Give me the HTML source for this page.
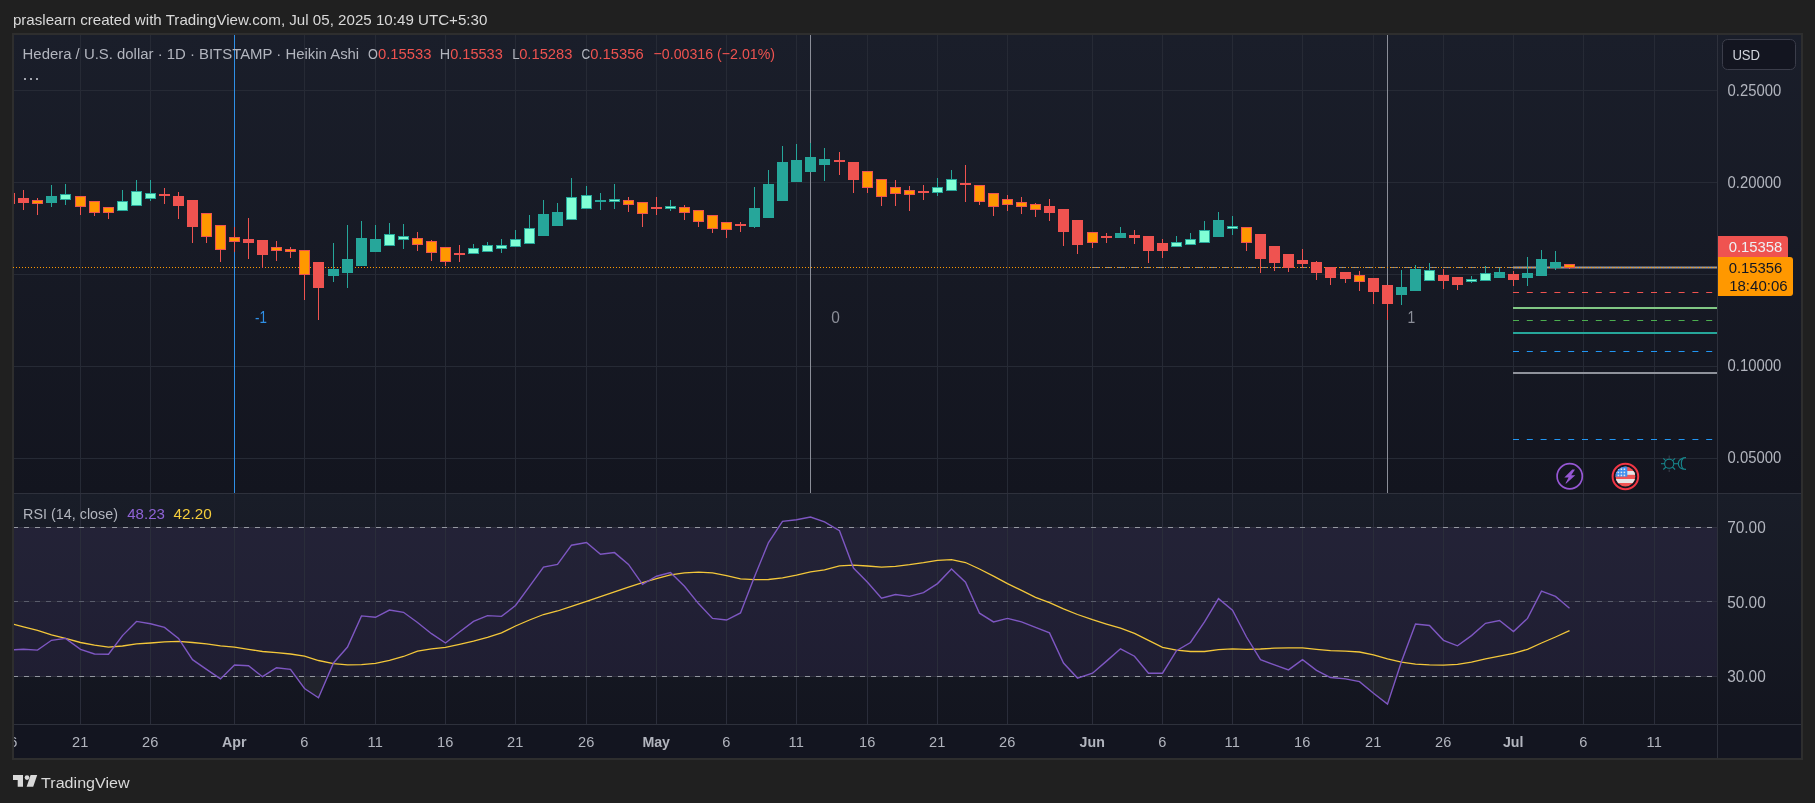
<!DOCTYPE html>
<html><head><meta charset="utf-8">
<style>
html,body{margin:0;padding:0;}
body{width:1815px;height:803px;background:#202020;overflow:hidden;position:relative;font-family:"Liberation Sans",sans-serif;}
.abs{position:absolute;}
.hdr{position:absolute;left:13px;top:10px;font-size:15px;color:#d6d6d6;white-space:nowrap;line-height:18px;}
svg{position:absolute;left:0;top:0;will-change:transform;}
.lg{position:absolute;left:23px;top:45px;font-size:15px;color:#b2b5be;white-space:nowrap;line-height:18px;}
.lg .v{color:#ef5350;}
.dots{position:absolute;left:23px;top:64px;font-size:15px;color:#b2b5be;line-height:18px;letter-spacing:1px;}
.rl{position:absolute;left:23px;top:505px;font-size:15px;color:#b2b5be;white-space:nowrap;line-height:18px;}
.pl{position:absolute;left:1728px;font-size:14px;color:#b2b5be;line-height:16px;}
.tl{position:absolute;top:734px;width:80px;text-align:center;font-size:14px;color:#b2b5be;line-height:16px;}
.tl.b{font-weight:bold;}
.usd{position:absolute;left:1722px;top:39px;width:72px;height:30px;border:1px solid #3b3d4a;border-radius:5px;background:#131520;box-sizing:border-box;}
.usd span{position:absolute;left:10px;top:6px;font-size:14px;color:#d1d4dc;}
.foot{position:absolute;left:42px;top:773px;font-size:15px;line-height:18px;color:#d9d9d9;}
</style></head><body>
<svg width="1815" height="803" viewBox="0 0 1815 803">
<defs>
<linearGradient id="gm" x1="0" y1="0" x2="0" y2="1"><stop offset="0" stop-color="#1a1e2a"/><stop offset="1" stop-color="#13151f"/></linearGradient>
<linearGradient id="gr" x1="0" y1="0" x2="0" y2="1"><stop offset="0" stop-color="#191d28"/><stop offset="1" stop-color="#13151f"/></linearGradient>
<clipPath id="cm"><rect x="14" y="35" width="1703" height="458"/></clipPath>
<clipPath id="cr"><rect x="14" y="494" width="1703" height="230"/></clipPath>
</defs>
<rect x="12" y="33" width="1791" height="727" fill="#2e2e2e"/>
<rect x="14" y="35" width="1787" height="458" fill="url(#gm)"/>
<rect x="14" y="494" width="1787" height="230" fill="url(#gr)"/>
<rect x="14" y="725" width="1787" height="33" fill="#131520"/>
<g stroke="#262a35" stroke-width="1" clip-path="url(#cm)">
<line x1="80.5" y1="34" x2="80.5" y2="493"/>
<line x1="150.5" y1="34" x2="150.5" y2="493"/>
<line x1="234.5" y1="34" x2="234.5" y2="493"/>
<line x1="304.5" y1="34" x2="304.5" y2="493"/>
<line x1="375.5" y1="34" x2="375.5" y2="493"/>
<line x1="445.5" y1="34" x2="445.5" y2="493"/>
<line x1="515.5" y1="34" x2="515.5" y2="493"/>
<line x1="586.5" y1="34" x2="586.5" y2="493"/>
<line x1="656.5" y1="34" x2="656.5" y2="493"/>
<line x1="726.5" y1="34" x2="726.5" y2="493"/>
<line x1="796.5" y1="34" x2="796.5" y2="493"/>
<line x1="867.5" y1="34" x2="867.5" y2="493"/>
<line x1="937.5" y1="34" x2="937.5" y2="493"/>
<line x1="1007.5" y1="34" x2="1007.5" y2="493"/>
<line x1="1092.5" y1="34" x2="1092.5" y2="493"/>
<line x1="1162.5" y1="34" x2="1162.5" y2="493"/>
<line x1="1232.5" y1="34" x2="1232.5" y2="493"/>
<line x1="1302.5" y1="34" x2="1302.5" y2="493"/>
<line x1="1373.5" y1="34" x2="1373.5" y2="493"/>
<line x1="1443.5" y1="34" x2="1443.5" y2="493"/>
<line x1="1513.5" y1="34" x2="1513.5" y2="493"/>
<line x1="1583.5" y1="34" x2="1583.5" y2="493"/>
<line x1="1654.5" y1="34" x2="1654.5" y2="493"/>
<line x1="13" y1="90.5" x2="1717" y2="90.5"/>
<line x1="13" y1="182.5" x2="1717" y2="182.5"/>
<line x1="13" y1="274.5" x2="1717" y2="274.5"/>
<line x1="13" y1="366.5" x2="1717" y2="366.5"/>
<line x1="13" y1="458.5" x2="1717" y2="458.5"/>
</g>
<line x1="14" y1="493.5" x2="1801" y2="493.5" stroke="#2e313c"/>
<line x1="14" y1="724.5" x2="1801" y2="724.5" stroke="#2e313c"/>
<line x1="1717.5" y1="35" x2="1717.5" y2="758" stroke="#2e313c"/>
<!-- vertical markers -->
<rect x="234" y="35" width="1" height="458" fill="#2f8fe6"/>
<rect x="810" y="35" width="1" height="458" fill="#8b8e98"/>
<rect x="1387" y="35" width="1" height="458" fill="#8b8e98"/>
<!-- current price dotted line -->
<line x1="1092" y1="267.5" x2="1513" y2="267.5" stroke="#7a8699" stroke-width="1" stroke-dasharray="7 6"/>
<rect x="1513" y="266.5" width="204" height="2" fill="#9598a1"/>
<line x1="13" y1="267.5" x2="1717" y2="267.5" stroke="#ff9800" stroke-width="1" stroke-dasharray="1 2"/>
<!-- level lines -->
<line x1="1513" y1="292.5" x2="1717" y2="292.5" stroke="#ef5350" stroke-width="1" stroke-dasharray="6 7.8"/>
<rect x="1513" y="307" width="204" height="2" fill="#81c784"/>
<line x1="1513" y1="320.5" x2="1717" y2="320.5" stroke="#4caf50" stroke-width="1" stroke-dasharray="6 7.8"/>
<rect x="1513" y="332" width="204" height="2" fill="#26a69a"/>
<line x1="1513" y1="351.5" x2="1717" y2="351.5" stroke="#2196f3" stroke-width="1" stroke-dasharray="6 7.8"/>
<rect x="1513" y="372" width="204" height="2" fill="#8f929b"/>
<line x1="1513" y1="439.5" x2="1717" y2="439.5" stroke="#2196f3" stroke-width="1" stroke-dasharray="6 7.8"/>
<g clip-path="url(#cm)">
<rect x="9" y="193" width="1" height="11" fill="#ef5350"/>
<rect x="4" y="193" width="11" height="11" fill="#ef5350"/>
<rect x="5" y="194" width="9" height="9" fill="#ff9800"/>
<rect x="23" y="190" width="1" height="20" fill="#ef5350"/>
<rect x="18" y="198" width="11" height="5" fill="#ef5350"/>
<rect x="37" y="198" width="1" height="17" fill="#ef5350"/>
<rect x="32" y="200" width="11" height="4" fill="#ef5350"/>
<rect x="33" y="201" width="9" height="2" fill="#ff9800"/>
<rect x="51" y="185" width="1" height="22" fill="#26a69a"/>
<rect x="46" y="196" width="11" height="7" fill="#26a69a"/>
<rect x="65" y="184" width="1" height="21" fill="#26a69a"/>
<rect x="60" y="194" width="11" height="6" fill="#26a69a"/>
<rect x="61" y="195" width="9" height="4" fill="#80ffd5"/>
<rect x="80" y="196" width="1" height="19" fill="#ef5350"/>
<rect x="75" y="196" width="11" height="11" fill="#ef5350"/>
<rect x="76" y="197" width="9" height="9" fill="#ff9800"/>
<rect x="94" y="201" width="1" height="15" fill="#ef5350"/>
<rect x="89" y="201" width="11" height="12" fill="#ef5350"/>
<rect x="90" y="202" width="9" height="10" fill="#ff9800"/>
<rect x="108" y="207" width="1" height="12" fill="#ef5350"/>
<rect x="103" y="207" width="11" height="6" fill="#ef5350"/>
<rect x="104" y="208" width="9" height="4" fill="#ff9800"/>
<rect x="122" y="190" width="1" height="21" fill="#26a69a"/>
<rect x="117" y="201" width="11" height="10" fill="#26a69a"/>
<rect x="118" y="202" width="9" height="8" fill="#80ffd5"/>
<rect x="136" y="180" width="1" height="26" fill="#26a69a"/>
<rect x="131" y="191" width="11" height="15" fill="#26a69a"/>
<rect x="132" y="192" width="9" height="13" fill="#80ffd5"/>
<rect x="150" y="180" width="1" height="21" fill="#26a69a"/>
<rect x="145" y="193" width="11" height="6" fill="#26a69a"/>
<rect x="146" y="194" width="9" height="4" fill="#80ffd5"/>
<rect x="164" y="188" width="1" height="16" fill="#ef5350"/>
<rect x="159" y="194" width="11" height="2" fill="#ef5350"/>
<rect x="178" y="192" width="1" height="27" fill="#ef5350"/>
<rect x="173" y="196" width="11" height="10" fill="#ef5350"/>
<rect x="192" y="200" width="1" height="43" fill="#ef5350"/>
<rect x="187" y="200" width="11" height="27" fill="#ef5350"/>
<rect x="206" y="213" width="1" height="30" fill="#ef5350"/>
<rect x="201" y="213" width="11" height="24" fill="#ef5350"/>
<rect x="202" y="214" width="9" height="22" fill="#ff9800"/>
<rect x="220" y="225" width="1" height="37" fill="#ef5350"/>
<rect x="215" y="225" width="11" height="25" fill="#ef5350"/>
<rect x="216" y="226" width="9" height="23" fill="#ff9800"/>
<rect x="234" y="227" width="1" height="25" fill="#ef5350"/>
<rect x="229" y="237" width="11" height="5" fill="#ef5350"/>
<rect x="230" y="238" width="9" height="3" fill="#ff9800"/>
<rect x="248" y="218" width="1" height="41" fill="#ef5350"/>
<rect x="243" y="239" width="11" height="4" fill="#ef5350"/>
<rect x="262" y="240" width="1" height="28" fill="#ef5350"/>
<rect x="257" y="240" width="11" height="15" fill="#ef5350"/>
<rect x="276" y="241" width="1" height="20" fill="#ef5350"/>
<rect x="271" y="247" width="11" height="4" fill="#ef5350"/>
<rect x="272" y="248" width="9" height="2" fill="#ff9800"/>
<rect x="290" y="247" width="1" height="11" fill="#ef5350"/>
<rect x="285" y="249" width="11" height="3" fill="#ef5350"/>
<rect x="286" y="250" width="9" height="1" fill="#ff9800"/>
<rect x="304" y="250" width="1" height="50" fill="#ef5350"/>
<rect x="299" y="250" width="11" height="25" fill="#ef5350"/>
<rect x="300" y="251" width="9" height="23" fill="#ff9800"/>
<rect x="318" y="262" width="1" height="58" fill="#ef5350"/>
<rect x="313" y="262" width="11" height="26" fill="#ef5350"/>
<rect x="333" y="243" width="1" height="39" fill="#26a69a"/>
<rect x="328" y="269" width="11" height="7" fill="#26a69a"/>
<rect x="347" y="225" width="1" height="63" fill="#26a69a"/>
<rect x="342" y="259" width="11" height="14" fill="#26a69a"/>
<rect x="361" y="221" width="1" height="45" fill="#26a69a"/>
<rect x="356" y="238" width="11" height="28" fill="#26a69a"/>
<rect x="375" y="225" width="1" height="27" fill="#26a69a"/>
<rect x="370" y="239" width="11" height="13" fill="#26a69a"/>
<rect x="389" y="223" width="1" height="23" fill="#26a69a"/>
<rect x="384" y="234" width="11" height="12" fill="#26a69a"/>
<rect x="385" y="235" width="9" height="10" fill="#80ffd5"/>
<rect x="403" y="224" width="1" height="25" fill="#26a69a"/>
<rect x="398" y="236" width="11" height="4" fill="#26a69a"/>
<rect x="399" y="237" width="9" height="2" fill="#80ffd5"/>
<rect x="417" y="232" width="1" height="19" fill="#ef5350"/>
<rect x="412" y="238" width="11" height="7" fill="#ef5350"/>
<rect x="413" y="239" width="9" height="5" fill="#ff9800"/>
<rect x="431" y="240" width="1" height="21" fill="#ef5350"/>
<rect x="426" y="241" width="11" height="12" fill="#ef5350"/>
<rect x="427" y="242" width="9" height="10" fill="#ff9800"/>
<rect x="445" y="247" width="1" height="19" fill="#ef5350"/>
<rect x="440" y="247" width="11" height="15" fill="#ef5350"/>
<rect x="441" y="248" width="9" height="13" fill="#ff9800"/>
<rect x="459" y="245" width="1" height="17" fill="#ef5350"/>
<rect x="454" y="253" width="11" height="2" fill="#ef5350"/>
<rect x="473" y="244" width="1" height="10" fill="#26a69a"/>
<rect x="468" y="248" width="11" height="6" fill="#26a69a"/>
<rect x="469" y="249" width="9" height="4" fill="#80ffd5"/>
<rect x="487" y="242" width="1" height="10" fill="#26a69a"/>
<rect x="482" y="245" width="11" height="7" fill="#26a69a"/>
<rect x="483" y="246" width="9" height="5" fill="#80ffd5"/>
<rect x="501" y="239" width="1" height="14" fill="#26a69a"/>
<rect x="496" y="245" width="11" height="4" fill="#26a69a"/>
<rect x="497" y="246" width="9" height="2" fill="#80ffd5"/>
<rect x="515" y="230" width="1" height="17" fill="#26a69a"/>
<rect x="510" y="239" width="11" height="8" fill="#26a69a"/>
<rect x="511" y="240" width="9" height="6" fill="#80ffd5"/>
<rect x="529" y="215" width="1" height="29" fill="#26a69a"/>
<rect x="524" y="228" width="11" height="16" fill="#26a69a"/>
<rect x="525" y="229" width="9" height="14" fill="#80ffd5"/>
<rect x="543" y="200" width="1" height="36" fill="#26a69a"/>
<rect x="538" y="214" width="11" height="22" fill="#26a69a"/>
<rect x="557" y="203" width="1" height="23" fill="#26a69a"/>
<rect x="552" y="212" width="11" height="14" fill="#26a69a"/>
<rect x="571" y="178" width="1" height="42" fill="#26a69a"/>
<rect x="566" y="197" width="11" height="23" fill="#26a69a"/>
<rect x="567" y="198" width="9" height="21" fill="#80ffd5"/>
<rect x="586" y="186" width="1" height="23" fill="#26a69a"/>
<rect x="581" y="195" width="11" height="14" fill="#26a69a"/>
<rect x="582" y="196" width="9" height="12" fill="#80ffd5"/>
<rect x="600" y="193" width="1" height="17" fill="#26a69a"/>
<rect x="595" y="200" width="11" height="2" fill="#26a69a"/>
<rect x="614" y="184" width="1" height="25" fill="#26a69a"/>
<rect x="609" y="199" width="11" height="3" fill="#26a69a"/>
<rect x="610" y="200" width="9" height="1" fill="#80ffd5"/>
<rect x="628" y="197" width="1" height="15" fill="#ef5350"/>
<rect x="623" y="200" width="11" height="5" fill="#ef5350"/>
<rect x="624" y="201" width="9" height="3" fill="#ff9800"/>
<rect x="642" y="202" width="1" height="25" fill="#ef5350"/>
<rect x="637" y="202" width="11" height="12" fill="#ef5350"/>
<rect x="638" y="203" width="9" height="10" fill="#ff9800"/>
<rect x="656" y="197" width="1" height="18" fill="#ef5350"/>
<rect x="651" y="207" width="11" height="2" fill="#ef5350"/>
<rect x="670" y="200" width="1" height="11" fill="#26a69a"/>
<rect x="665" y="206" width="11" height="3" fill="#26a69a"/>
<rect x="666" y="207" width="9" height="1" fill="#80ffd5"/>
<rect x="684" y="205" width="1" height="15" fill="#ef5350"/>
<rect x="679" y="207" width="11" height="6" fill="#ef5350"/>
<rect x="680" y="208" width="9" height="4" fill="#ff9800"/>
<rect x="698" y="210" width="1" height="17" fill="#ef5350"/>
<rect x="693" y="210" width="11" height="12" fill="#ef5350"/>
<rect x="694" y="211" width="9" height="10" fill="#ff9800"/>
<rect x="712" y="215" width="1" height="18" fill="#ef5350"/>
<rect x="707" y="215" width="11" height="14" fill="#ef5350"/>
<rect x="708" y="216" width="9" height="12" fill="#ff9800"/>
<rect x="726" y="222" width="1" height="16" fill="#ef5350"/>
<rect x="721" y="222" width="11" height="8" fill="#ef5350"/>
<rect x="722" y="223" width="9" height="6" fill="#ff9800"/>
<rect x="740" y="222" width="1" height="10" fill="#ef5350"/>
<rect x="735" y="224" width="11" height="2" fill="#ef5350"/>
<rect x="754" y="187" width="1" height="41" fill="#26a69a"/>
<rect x="749" y="208" width="11" height="19" fill="#26a69a"/>
<rect x="768" y="170" width="1" height="48" fill="#26a69a"/>
<rect x="763" y="184" width="11" height="34" fill="#26a69a"/>
<rect x="782" y="146" width="1" height="55" fill="#26a69a"/>
<rect x="777" y="162" width="11" height="39" fill="#26a69a"/>
<rect x="796" y="144" width="1" height="38" fill="#26a69a"/>
<rect x="791" y="160" width="11" height="22" fill="#26a69a"/>
<rect x="810" y="143" width="1" height="29" fill="#26a69a"/>
<rect x="805" y="157" width="11" height="15" fill="#26a69a"/>
<rect x="824" y="148" width="1" height="33" fill="#26a69a"/>
<rect x="819" y="159" width="11" height="6" fill="#26a69a"/>
<rect x="839" y="152" width="1" height="23" fill="#ef5350"/>
<rect x="834" y="160" width="11" height="2" fill="#ef5350"/>
<rect x="853" y="162" width="1" height="31" fill="#ef5350"/>
<rect x="848" y="162" width="11" height="18" fill="#ef5350"/>
<rect x="867" y="171" width="1" height="22" fill="#ef5350"/>
<rect x="862" y="171" width="11" height="17" fill="#ef5350"/>
<rect x="863" y="172" width="9" height="15" fill="#ff9800"/>
<rect x="881" y="179" width="1" height="27" fill="#ef5350"/>
<rect x="876" y="179" width="11" height="18" fill="#ef5350"/>
<rect x="877" y="180" width="9" height="16" fill="#ff9800"/>
<rect x="895" y="180" width="1" height="26" fill="#ef5350"/>
<rect x="890" y="187" width="11" height="7" fill="#ef5350"/>
<rect x="891" y="188" width="9" height="5" fill="#ff9800"/>
<rect x="909" y="186" width="1" height="25" fill="#ef5350"/>
<rect x="904" y="190" width="11" height="5" fill="#ef5350"/>
<rect x="905" y="191" width="9" height="3" fill="#ff9800"/>
<rect x="923" y="185" width="1" height="15" fill="#ef5350"/>
<rect x="918" y="191" width="11" height="2" fill="#ef5350"/>
<rect x="937" y="178" width="1" height="18" fill="#26a69a"/>
<rect x="932" y="187" width="11" height="6" fill="#26a69a"/>
<rect x="933" y="188" width="9" height="4" fill="#80ffd5"/>
<rect x="951" y="170" width="1" height="21" fill="#26a69a"/>
<rect x="946" y="179" width="11" height="12" fill="#26a69a"/>
<rect x="947" y="180" width="9" height="10" fill="#80ffd5"/>
<rect x="965" y="165" width="1" height="37" fill="#ef5350"/>
<rect x="960" y="183" width="11" height="2" fill="#ef5350"/>
<rect x="979" y="185" width="1" height="20" fill="#ef5350"/>
<rect x="974" y="185" width="11" height="17" fill="#ef5350"/>
<rect x="975" y="186" width="9" height="15" fill="#ff9800"/>
<rect x="993" y="193" width="1" height="23" fill="#ef5350"/>
<rect x="988" y="193" width="11" height="14" fill="#ef5350"/>
<rect x="989" y="194" width="9" height="12" fill="#ff9800"/>
<rect x="1007" y="195" width="1" height="16" fill="#ef5350"/>
<rect x="1002" y="199" width="11" height="6" fill="#ef5350"/>
<rect x="1003" y="200" width="9" height="4" fill="#ff9800"/>
<rect x="1021" y="197" width="1" height="17" fill="#ef5350"/>
<rect x="1016" y="202" width="11" height="5" fill="#ef5350"/>
<rect x="1017" y="203" width="9" height="3" fill="#ff9800"/>
<rect x="1035" y="203" width="1" height="14" fill="#ef5350"/>
<rect x="1030" y="204" width="11" height="6" fill="#ef5350"/>
<rect x="1031" y="205" width="9" height="4" fill="#ff9800"/>
<rect x="1049" y="199" width="1" height="22" fill="#ef5350"/>
<rect x="1044" y="206" width="11" height="7" fill="#ef5350"/>
<rect x="1063" y="209" width="1" height="37" fill="#ef5350"/>
<rect x="1058" y="209" width="11" height="23" fill="#ef5350"/>
<rect x="1077" y="220" width="1" height="34" fill="#ef5350"/>
<rect x="1072" y="220" width="11" height="25" fill="#ef5350"/>
<rect x="1092" y="232" width="1" height="16" fill="#ef5350"/>
<rect x="1087" y="232" width="11" height="11" fill="#ef5350"/>
<rect x="1088" y="233" width="9" height="9" fill="#ff9800"/>
<rect x="1106" y="233" width="1" height="10" fill="#ef5350"/>
<rect x="1101" y="236" width="11" height="2" fill="#ef5350"/>
<rect x="1120" y="227" width="1" height="11" fill="#26a69a"/>
<rect x="1115" y="233" width="11" height="5" fill="#26a69a"/>
<rect x="1134" y="230" width="1" height="14" fill="#ef5350"/>
<rect x="1129" y="235" width="11" height="3" fill="#ef5350"/>
<rect x="1148" y="236" width="1" height="27" fill="#ef5350"/>
<rect x="1143" y="236" width="11" height="15" fill="#ef5350"/>
<rect x="1162" y="239" width="1" height="19" fill="#ef5350"/>
<rect x="1157" y="243" width="11" height="8" fill="#ef5350"/>
<rect x="1176" y="236" width="1" height="11" fill="#26a69a"/>
<rect x="1171" y="242" width="11" height="5" fill="#26a69a"/>
<rect x="1172" y="243" width="9" height="3" fill="#80ffd5"/>
<rect x="1190" y="233" width="1" height="12" fill="#26a69a"/>
<rect x="1185" y="239" width="11" height="6" fill="#26a69a"/>
<rect x="1186" y="240" width="9" height="4" fill="#80ffd5"/>
<rect x="1204" y="221" width="1" height="22" fill="#26a69a"/>
<rect x="1199" y="230" width="11" height="13" fill="#26a69a"/>
<rect x="1200" y="231" width="9" height="11" fill="#80ffd5"/>
<rect x="1218" y="212" width="1" height="25" fill="#26a69a"/>
<rect x="1213" y="220" width="11" height="17" fill="#26a69a"/>
<rect x="1232" y="216" width="1" height="19" fill="#26a69a"/>
<rect x="1227" y="226" width="11" height="3" fill="#26a69a"/>
<rect x="1228" y="227" width="9" height="1" fill="#80ffd5"/>
<rect x="1246" y="227" width="1" height="24" fill="#ef5350"/>
<rect x="1241" y="227" width="11" height="16" fill="#ef5350"/>
<rect x="1242" y="228" width="9" height="14" fill="#ff9800"/>
<rect x="1260" y="234" width="1" height="39" fill="#ef5350"/>
<rect x="1255" y="234" width="11" height="25" fill="#ef5350"/>
<rect x="1274" y="246" width="1" height="25" fill="#ef5350"/>
<rect x="1269" y="246" width="11" height="17" fill="#ef5350"/>
<rect x="1288" y="254" width="1" height="18" fill="#ef5350"/>
<rect x="1283" y="254" width="11" height="14" fill="#ef5350"/>
<rect x="1302" y="249" width="1" height="19" fill="#ef5350"/>
<rect x="1297" y="260" width="11" height="4" fill="#ef5350"/>
<rect x="1316" y="261" width="1" height="19" fill="#ef5350"/>
<rect x="1311" y="262" width="11" height="11" fill="#ef5350"/>
<rect x="1330" y="267" width="1" height="18" fill="#ef5350"/>
<rect x="1325" y="267" width="11" height="11" fill="#ef5350"/>
<rect x="1345" y="272" width="1" height="11" fill="#ef5350"/>
<rect x="1340" y="272" width="11" height="7" fill="#ef5350"/>
<rect x="1359" y="271" width="1" height="20" fill="#ef5350"/>
<rect x="1354" y="275" width="11" height="7" fill="#ef5350"/>
<rect x="1355" y="276" width="9" height="5" fill="#ff9800"/>
<rect x="1373" y="278" width="1" height="26" fill="#ef5350"/>
<rect x="1368" y="278" width="11" height="14" fill="#ef5350"/>
<rect x="1387" y="285" width="1" height="35" fill="#ef5350"/>
<rect x="1382" y="285" width="11" height="19" fill="#ef5350"/>
<rect x="1401" y="270" width="1" height="35" fill="#26a69a"/>
<rect x="1396" y="287" width="11" height="8" fill="#26a69a"/>
<rect x="1415" y="265" width="1" height="26" fill="#26a69a"/>
<rect x="1410" y="269" width="11" height="22" fill="#26a69a"/>
<rect x="1429" y="263" width="1" height="18" fill="#26a69a"/>
<rect x="1424" y="270" width="11" height="11" fill="#26a69a"/>
<rect x="1425" y="271" width="9" height="9" fill="#80ffd5"/>
<rect x="1443" y="269" width="1" height="20" fill="#ef5350"/>
<rect x="1438" y="275" width="11" height="6" fill="#ef5350"/>
<rect x="1457" y="277" width="1" height="13" fill="#ef5350"/>
<rect x="1452" y="277" width="11" height="8" fill="#ef5350"/>
<rect x="1471" y="276" width="1" height="7" fill="#26a69a"/>
<rect x="1466" y="279" width="11" height="3" fill="#26a69a"/>
<rect x="1467" y="280" width="9" height="1" fill="#80ffd5"/>
<rect x="1485" y="266" width="1" height="15" fill="#26a69a"/>
<rect x="1480" y="273" width="11" height="8" fill="#26a69a"/>
<rect x="1481" y="274" width="9" height="6" fill="#80ffd5"/>
<rect x="1499" y="268" width="1" height="10" fill="#26a69a"/>
<rect x="1494" y="272" width="11" height="6" fill="#26a69a"/>
<rect x="1513" y="271" width="1" height="15" fill="#ef5350"/>
<rect x="1508" y="274" width="11" height="6" fill="#ef5350"/>
<rect x="1527" y="257" width="1" height="29" fill="#26a69a"/>
<rect x="1522" y="273" width="11" height="5" fill="#26a69a"/>
<rect x="1541" y="250" width="1" height="26" fill="#26a69a"/>
<rect x="1536" y="259" width="11" height="17" fill="#26a69a"/>
<rect x="1555" y="251" width="1" height="19" fill="#26a69a"/>
<rect x="1550" y="262" width="11" height="6" fill="#26a69a"/>
<rect x="1569" y="264" width="1" height="5" fill="#ef5350"/>
<rect x="1564" y="264" width="11" height="4" fill="#ef5350"/>
<rect x="1565" y="265" width="9" height="2" fill="#ff9800"/>
</g>
<!-- RSI -->
<g clip-path="url(#cr)">
<rect x="13" y="528" width="1704" height="148" fill="#7e57c2" fill-opacity="0.11"/>
<g stroke="#2a2d3a" stroke-width="1"><line x1="80.5" y1="494" x2="80.5" y2="724"/><line x1="150.5" y1="494" x2="150.5" y2="724"/><line x1="234.5" y1="494" x2="234.5" y2="724"/><line x1="304.5" y1="494" x2="304.5" y2="724"/><line x1="375.5" y1="494" x2="375.5" y2="724"/><line x1="445.5" y1="494" x2="445.5" y2="724"/><line x1="515.5" y1="494" x2="515.5" y2="724"/><line x1="586.5" y1="494" x2="586.5" y2="724"/><line x1="656.5" y1="494" x2="656.5" y2="724"/><line x1="726.5" y1="494" x2="726.5" y2="724"/><line x1="796.5" y1="494" x2="796.5" y2="724"/><line x1="867.5" y1="494" x2="867.5" y2="724"/><line x1="937.5" y1="494" x2="937.5" y2="724"/><line x1="1007.5" y1="494" x2="1007.5" y2="724"/><line x1="1092.5" y1="494" x2="1092.5" y2="724"/><line x1="1162.5" y1="494" x2="1162.5" y2="724"/><line x1="1232.5" y1="494" x2="1232.5" y2="724"/><line x1="1302.5" y1="494" x2="1302.5" y2="724"/><line x1="1373.5" y1="494" x2="1373.5" y2="724"/><line x1="1443.5" y1="494" x2="1443.5" y2="724"/><line x1="1513.5" y1="494" x2="1513.5" y2="724"/><line x1="1583.5" y1="494" x2="1583.5" y2="724"/><line x1="1654.5" y1="494" x2="1654.5" y2="724"/></g>
<line x1="13" y1="527.5" x2="1717" y2="527.5" stroke="#2e2f3e"/>
<line x1="13" y1="676.5" x2="1717" y2="676.5" stroke="#2e2f3e"/>
<line x1="13" y1="527.5" x2="1717" y2="527.5" stroke="#9598a1" stroke-dasharray="5 6"/>
<line x1="13" y1="601.5" x2="1717" y2="601.5" stroke="#2c2c3c"/>
<line x1="13" y1="601.5" x2="1717" y2="601.5" stroke="#5a5d6c" stroke-dasharray="5 6"/>
<line x1="13" y1="676.5" x2="1717" y2="676.5" stroke="#9598a1" stroke-dasharray="5 6"/>
<clipPath id="os"><rect x="13" y="676.5" width="1704" height="50"/></clipPath>
<polygon points="13,676.5 9.5,650.0 23.5,649.3 37.5,650.1 51.5,640.3 65.5,638.4 80.5,649.3 94.5,654.0 108.5,654.2 122.5,635.6 136.5,621.4 150.5,623.8 164.5,627.4 178.5,638.4 192.5,659.7 206.5,669.3 220.5,678.9 234.5,665.0 248.5,665.8 262.5,676.7 276.5,667.7 290.5,669.3 304.5,688.5 318.5,697.8 333.5,663.0 347.5,647.0 361.5,615.9 375.5,617.3 389.5,610.1 403.5,612.3 417.5,622.5 431.5,633.7 445.5,643.0 459.5,632.0 473.5,621.4 487.5,615.6 501.5,616.4 515.5,605.5 529.5,586.3 543.5,567.1 557.5,564.4 571.5,545.2 586.5,542.5 600.5,554.2 614.5,552.6 628.5,564.4 642.5,584.4 656.5,576.2 670.5,572.6 684.5,586.3 698.5,603.6 712.5,618.4 726.5,620.0 740.5,612.9 754.5,576.7 768.5,542.5 782.5,521.4 796.5,519.7 810.5,517.0 824.5,521.9 839.5,530.7 853.5,568.0 867.5,582.2 881.5,598.1 895.5,594.5 909.5,596.4 923.5,592.6 937.5,583.6 951.5,569.0 965.5,582.2 979.5,613.2 993.5,621.9 1007.5,618.4 1021.5,621.9 1035.5,627.4 1049.5,632.9 1063.5,663.0 1077.5,678.1 1092.5,673.2 1106.5,661.1 1120.5,648.8 1134.5,656.2 1148.5,673.2 1162.5,673.2 1176.5,650.7 1190.5,642.5 1204.5,621.9 1218.5,598.6 1232.5,610.1 1246.5,637.0 1260.5,659.7 1274.5,664.9 1288.5,669.9 1302.5,659.7 1316.5,670.4 1330.5,677.5 1345.5,678.9 1359.5,681.6 1373.5,693.2 1387.5,704.1 1401.5,661.6 1415.5,624.1 1429.5,625.5 1443.5,640.3 1457.5,645.8 1471.5,635.6 1485.5,623.3 1499.5,620.5 1513.5,631.5 1527.5,618.4 1541.5,591.2 1555.5,596.4 1569.5,608.2 1717,676.5" fill="#5d5d5d" fill-opacity="0.18" clip-path="url(#os)"/>
<polyline points="9.5,623.3 23.5,626.8 37.5,630.4 51.5,634.8 65.5,638.4 80.5,642.5 94.5,645.2 108.5,647.1 122.5,646.0 136.5,643.8 150.5,643.0 164.5,641.9 178.5,641.4 192.5,642.5 206.5,643.8 220.5,645.8 234.5,647.1 248.5,649.3 262.5,651.5 276.5,652.6 290.5,654.0 304.5,656.2 318.5,660.5 333.5,663.6 347.5,664.9 361.5,664.7 375.5,663.3 389.5,660.3 403.5,656.5 417.5,651.2 431.5,648.8 445.5,647.4 459.5,644.4 473.5,641.1 487.5,637.3 501.5,632.9 515.5,626.0 529.5,620.0 543.5,614.5 557.5,611.0 571.5,606.3 586.5,601.4 600.5,596.7 614.5,591.8 628.5,587.1 642.5,582.7 656.5,578.6 670.5,574.8 684.5,572.9 698.5,572.1 712.5,572.9 726.5,575.6 740.5,578.9 754.5,579.7 768.5,579.5 782.5,577.8 796.5,575.1 810.5,571.8 824.5,569.9 839.5,565.8 853.5,565.2 867.5,566.0 881.5,567.1 895.5,566.3 909.5,564.7 923.5,562.7 937.5,560.3 951.5,559.7 965.5,562.5 979.5,569.0 993.5,576.2 1007.5,583.6 1021.5,590.4 1035.5,597.3 1049.5,602.7 1063.5,608.8 1077.5,614.5 1092.5,619.7 1106.5,624.1 1120.5,628.2 1134.5,633.4 1148.5,640.3 1162.5,647.4 1176.5,650.1 1190.5,651.5 1204.5,651.5 1218.5,649.6 1232.5,648.8 1246.5,649.3 1260.5,649.0 1274.5,648.2 1288.5,647.9 1302.5,647.9 1316.5,649.3 1330.5,650.7 1345.5,651.2 1359.5,652.0 1373.5,654.8 1387.5,658.9 1401.5,662.2 1415.5,664.1 1429.5,664.9 1443.5,665.2 1457.5,664.4 1471.5,662.2 1485.5,658.9 1499.5,656.2 1513.5,653.4 1527.5,649.3 1541.5,643.0 1555.5,637.0 1569.5,630.7" fill="none" stroke="#f3c73a" stroke-width="1.3"/>
<polyline points="9.5,650.0 23.5,649.3 37.5,650.1 51.5,640.3 65.5,638.4 80.5,649.3 94.5,654.0 108.5,654.2 122.5,635.6 136.5,621.4 150.5,623.8 164.5,627.4 178.5,638.4 192.5,659.7 206.5,669.3 220.5,678.9 234.5,665.0 248.5,665.8 262.5,676.7 276.5,667.7 290.5,669.3 304.5,688.5 318.5,697.8 333.5,663.0 347.5,647.0 361.5,615.9 375.5,617.3 389.5,610.1 403.5,612.3 417.5,622.5 431.5,633.7 445.5,643.0 459.5,632.0 473.5,621.4 487.5,615.6 501.5,616.4 515.5,605.5 529.5,586.3 543.5,567.1 557.5,564.4 571.5,545.2 586.5,542.5 600.5,554.2 614.5,552.6 628.5,564.4 642.5,584.4 656.5,576.2 670.5,572.6 684.5,586.3 698.5,603.6 712.5,618.4 726.5,620.0 740.5,612.9 754.5,576.7 768.5,542.5 782.5,521.4 796.5,519.7 810.5,517.0 824.5,521.9 839.5,530.7 853.5,568.0 867.5,582.2 881.5,598.1 895.5,594.5 909.5,596.4 923.5,592.6 937.5,583.6 951.5,569.0 965.5,582.2 979.5,613.2 993.5,621.9 1007.5,618.4 1021.5,621.9 1035.5,627.4 1049.5,632.9 1063.5,663.0 1077.5,678.1 1092.5,673.2 1106.5,661.1 1120.5,648.8 1134.5,656.2 1148.5,673.2 1162.5,673.2 1176.5,650.7 1190.5,642.5 1204.5,621.9 1218.5,598.6 1232.5,610.1 1246.5,637.0 1260.5,659.7 1274.5,664.9 1288.5,669.9 1302.5,659.7 1316.5,670.4 1330.5,677.5 1345.5,678.9 1359.5,681.6 1373.5,693.2 1387.5,704.1 1401.5,661.6 1415.5,624.1 1429.5,625.5 1443.5,640.3 1457.5,645.8 1471.5,635.6 1485.5,623.3 1499.5,620.5 1513.5,631.5 1527.5,618.4 1541.5,591.2 1555.5,596.4 1569.5,608.2" fill="none" stroke="#7e57c2" stroke-width="1.4"/>
</g>

<g>
<circle cx="1569.7" cy="476.3" r="12.6" fill="none" stroke="#9657d4" stroke-width="1.7"/>
<path d="M1572.3,469.6 L1575,469.6 L1571.2,475.3 L1575.3,475.3 L1566.2,483.4 L1565.4,483.4 L1568.6,477.6 L1564.3,477.6 Z" fill="#9657d4"/>
<circle cx="1625.4" cy="476.5" r="12.8" fill="none" stroke="#f23645" stroke-width="2"/>
<clipPath id="fc"><circle cx="1625.4" cy="476.5" r="9.9"/></clipPath>
<g clip-path="url(#fc)">
<rect x="1615" y="466" width="21" height="21" fill="#f05454"/>
<rect x="1615" y="471" width="21" height="3.8" fill="#e6e6e6"/>
<rect x="1615" y="479" width="21" height="4" fill="#e6e6e6"/>
<rect x="1615" y="466" width="12.3" height="10.6" fill="#3d8ff0"/>
<g fill="#e6e6e6">
<rect x="1617.6" y="468.4" width="1.6" height="1.6"/><rect x="1620.6" y="468.4" width="1.6" height="1.6"/><rect x="1623.6" y="468.4" width="1.6" height="1.6"/>
<rect x="1617.6" y="471.6" width="1.6" height="1.6"/><rect x="1620.6" y="471.6" width="1.6" height="1.6"/><rect x="1623.6" y="471.6" width="1.6" height="1.6"/>
<rect x="1617.6" y="474.6" width="1.6" height="1.6"/><rect x="1620.6" y="474.6" width="1.6" height="1.6"/><rect x="1623.6" y="474.6" width="1.6" height="1.6"/>
</g>
</g>
<g stroke="#17858b" stroke-width="1.1" fill="none">
<circle cx="1669.2" cy="463.7" r="4.6"/>
<line x1="1661" y1="463.7" x2="1664.6" y2="463.7"/>
<line x1="1673.8" y1="463.7" x2="1678.2" y2="463.7"/>
<line x1="1663.3" y1="458.3" x2="1666" y2="460.8"/>
<line x1="1672.4" y1="460.8" x2="1675.1" y2="458.3"/>
<line x1="1663.3" y1="469.5" x2="1666" y2="467"/>
<line x1="1672.4" y1="467" x2="1675.1" y2="469.5"/>
<path d="M1686,457.6 C1684,457.6 1678.3,458.5 1678.3,463.6 C1678.3,468.5 1683,469.4 1686,469.4"/>
<path d="M1683.5,458 C1680.5,460 1680.6,467 1683.5,469"/>
</g>
<g stroke="#3a3d48" stroke-width="1.1"><line x1="1669.2" y1="455.5" x2="1669.2" y2="458"/><line x1="1669.2" y1="469.5" x2="1669.2" y2="472"/></g>
</g>
<g fill="#d9d9d9">
<path d="M13,775 L23,775 L23,786.8 L17.7,786.8 L17.7,780 L13,780 Z"/>
<circle cx="27" cy="777.6" r="2.35"/>
<path d="M30.6,775 L37.2,775 L33.2,786.8 L26.6,786.8 Z"/>
</g>

<rect x="1722.5" y="39.5" width="73" height="30" rx="5" fill="#131520" stroke="#3b3d4a"/>
<path d="M1718,236 H1785 Q1788,236 1788,239 V257 H1718 Z" fill="#ef5350"/>
<path d="M1718,257 H1790 Q1793,257 1793,260 V293 Q1793,296 1790,296 H1718 Z" fill="#ff9800"/>
<clipPath id="ct"><rect x="14" y="725" width="1703" height="33"/></clipPath>
<g font-family="Liberation Sans">
<text x="12.9" y="24.6" font-size="15" font-weight="normal" fill="#d9d9d9" textLength="474.5" lengthAdjust="spacingAndGlyphs">praslearn created with TradingView.com, Jul 05, 2025 10:49 UTC+5:30</text>
<text x="22.6" y="58.9" font-size="15.5" font-weight="normal" fill="#b2b5be" textLength="336.6" lengthAdjust="spacingAndGlyphs">Hedera / U.S. dollar · 1D · BITSTAMP · Heikin Ashi</text>
<text x="368.0" y="58.9" font-size="15.5" font-weight="normal" fill="#b2b5be" textLength="9.9" lengthAdjust="spacingAndGlyphs">O</text>
<text x="378.0" y="58.9" font-size="15.5" font-weight="normal" fill="#ef5350" textLength="53.5" lengthAdjust="spacingAndGlyphs">0.15533</text>
<text x="439.8" y="58.9" font-size="15.5" font-weight="normal" fill="#b2b5be" textLength="10.4" lengthAdjust="spacingAndGlyphs">H</text>
<text x="450.2" y="58.9" font-size="15.5" font-weight="normal" fill="#ef5350" textLength="52.6" lengthAdjust="spacingAndGlyphs">0.15533</text>
<text x="512.2" y="58.9" font-size="15.5" font-weight="normal" fill="#b2b5be" textLength="7.4" lengthAdjust="spacingAndGlyphs">L</text>
<text x="519.2" y="58.9" font-size="15.5" font-weight="normal" fill="#ef5350" textLength="53.2" lengthAdjust="spacingAndGlyphs">0.15283</text>
<text x="581.6" y="58.9" font-size="15.5" font-weight="normal" fill="#b2b5be" textLength="8.7" lengthAdjust="spacingAndGlyphs">C</text>
<text x="590.3" y="58.9" font-size="15.5" font-weight="normal" fill="#ef5350" textLength="53.3" lengthAdjust="spacingAndGlyphs">0.15356</text>
<text x="653.6" y="58.9" font-size="15.5" font-weight="normal" fill="#ef5350" textLength="121.4" lengthAdjust="spacingAndGlyphs">−0.00316 (−2.01%)</text>
<text x="23.1" y="518.7" font-size="15.2" font-weight="normal" fill="#b2b5be" textLength="94.9" lengthAdjust="spacingAndGlyphs">RSI (14, close)</text>
<text x="127.2" y="518.7" font-size="15.2" font-weight="normal" fill="#8f63d6" textLength="37.7" lengthAdjust="spacingAndGlyphs">48.23</text>
<text x="173.5" y="518.7" font-size="15.2" font-weight="normal" fill="#f5cd3c" textLength="38.2" lengthAdjust="spacingAndGlyphs">42.20</text>
<text x="1727.6" y="96.1" font-size="16" font-weight="normal" fill="#b2b5be" textLength="53.6" lengthAdjust="spacingAndGlyphs">0.25000</text>
<text x="1727.6" y="188.2" font-size="16" font-weight="normal" fill="#b2b5be" textLength="53.6" lengthAdjust="spacingAndGlyphs">0.20000</text>
<text x="1727.6" y="371.4" font-size="16" font-weight="normal" fill="#b2b5be" textLength="53.6" lengthAdjust="spacingAndGlyphs">0.10000</text>
<text x="1727.6" y="463.3" font-size="16" font-weight="normal" fill="#b2b5be" textLength="53.6" lengthAdjust="spacingAndGlyphs">0.05000</text>
<text x="1727.2" y="532.8" font-size="16" font-weight="normal" fill="#b2b5be" textLength="38.5" lengthAdjust="spacingAndGlyphs">70.00</text>
<text x="1727.2" y="607.5" font-size="16" font-weight="normal" fill="#b2b5be" textLength="38.5" lengthAdjust="spacingAndGlyphs">50.00</text>
<text x="1727.2" y="682.1" font-size="16" font-weight="normal" fill="#b2b5be" textLength="38.5" lengthAdjust="spacingAndGlyphs">30.00</text>
<text x="1728.7" y="252.0" font-size="15.2" font-weight="normal" fill="#eef0f4" textLength="53.7" lengthAdjust="spacingAndGlyphs">0.15358</text>
<text x="1728.7" y="273.2" font-size="15.2" font-weight="normal" fill="#131722" textLength="53.7" lengthAdjust="spacingAndGlyphs">0.15356</text>
<text x="1729.2" y="290.8" font-size="15.2" font-weight="normal" fill="#131722" textLength="58.4" lengthAdjust="spacingAndGlyphs">18:40:06</text>
<text x="1732.4" y="59.7" font-size="15" font-weight="normal" fill="#d1d4dc" textLength="27.7" lengthAdjust="spacingAndGlyphs">USD</text>
<text x="255.0" y="323.2" font-size="16" font-weight="normal" fill="#2f8fe6" textLength="11.9" lengthAdjust="spacingAndGlyphs">-1</text>
<text x="831.3" y="323.2" font-size="16" font-weight="normal" fill="#8b8e98" textLength="8.6" lengthAdjust="spacingAndGlyphs">0</text>
<text x="1407.4" y="323.2" font-size="16" font-weight="normal" fill="#8b8e98" textLength="7.7" lengthAdjust="spacingAndGlyphs">1</text>
<text x="41.1" y="787.9" font-size="15.5" font-weight="normal" fill="#d9d9d9" textLength="88.5" lengthAdjust="spacingAndGlyphs">TradingView</text>
<g fill="#a3a6af"><rect x="24" y="78" width="2" height="2"/><rect x="30" y="78" width="2" height="2"/><rect x="36" y="78" width="2" height="2"/></g>
<g clip-path="url(#ct)">
<text x="9.2" y="747.1" font-size="14.6" font-weight="normal" fill="#b2b5be" text-anchor="middle">16</text>
<text x="80.2" y="747.1" font-size="14.6" font-weight="normal" fill="#b2b5be" text-anchor="middle">21</text>
<text x="150.2" y="747.1" font-size="14.6" font-weight="normal" fill="#b2b5be" text-anchor="middle">26</text>
<text x="234.2" y="747.1" font-size="14.2" font-weight="bold" fill="#b2b5be" text-anchor="middle">Apr</text>
<text x="304.2" y="747.1" font-size="14.6" font-weight="normal" fill="#b2b5be" text-anchor="middle">6</text>
<text x="375.2" y="747.1" font-size="14.6" font-weight="normal" fill="#b2b5be" text-anchor="middle">11</text>
<text x="445.2" y="747.1" font-size="14.6" font-weight="normal" fill="#b2b5be" text-anchor="middle">16</text>
<text x="515.2" y="747.1" font-size="14.6" font-weight="normal" fill="#b2b5be" text-anchor="middle">21</text>
<text x="586.2" y="747.1" font-size="14.6" font-weight="normal" fill="#b2b5be" text-anchor="middle">26</text>
<text x="656.2" y="747.1" font-size="14.2" font-weight="bold" fill="#b2b5be" text-anchor="middle">May</text>
<text x="726.2" y="747.1" font-size="14.6" font-weight="normal" fill="#b2b5be" text-anchor="middle">6</text>
<text x="796.2" y="747.1" font-size="14.6" font-weight="normal" fill="#b2b5be" text-anchor="middle">11</text>
<text x="867.2" y="747.1" font-size="14.6" font-weight="normal" fill="#b2b5be" text-anchor="middle">16</text>
<text x="937.2" y="747.1" font-size="14.6" font-weight="normal" fill="#b2b5be" text-anchor="middle">21</text>
<text x="1007.2" y="747.1" font-size="14.6" font-weight="normal" fill="#b2b5be" text-anchor="middle">26</text>
<text x="1092.2" y="747.1" font-size="14.2" font-weight="bold" fill="#b2b5be" text-anchor="middle">Jun</text>
<text x="1162.2" y="747.1" font-size="14.6" font-weight="normal" fill="#b2b5be" text-anchor="middle">6</text>
<text x="1232.2" y="747.1" font-size="14.6" font-weight="normal" fill="#b2b5be" text-anchor="middle">11</text>
<text x="1302.2" y="747.1" font-size="14.6" font-weight="normal" fill="#b2b5be" text-anchor="middle">16</text>
<text x="1373.2" y="747.1" font-size="14.6" font-weight="normal" fill="#b2b5be" text-anchor="middle">21</text>
<text x="1443.2" y="747.1" font-size="14.6" font-weight="normal" fill="#b2b5be" text-anchor="middle">26</text>
<text x="1513.2" y="747.1" font-size="14.2" font-weight="bold" fill="#b2b5be" text-anchor="middle">Jul</text>
<text x="1583.2" y="747.1" font-size="14.6" font-weight="normal" fill="#b2b5be" text-anchor="middle">6</text>
<text x="1654.2" y="747.1" font-size="14.6" font-weight="normal" fill="#b2b5be" text-anchor="middle">11</text>
</g>
</g>
</svg>
</body></html>
